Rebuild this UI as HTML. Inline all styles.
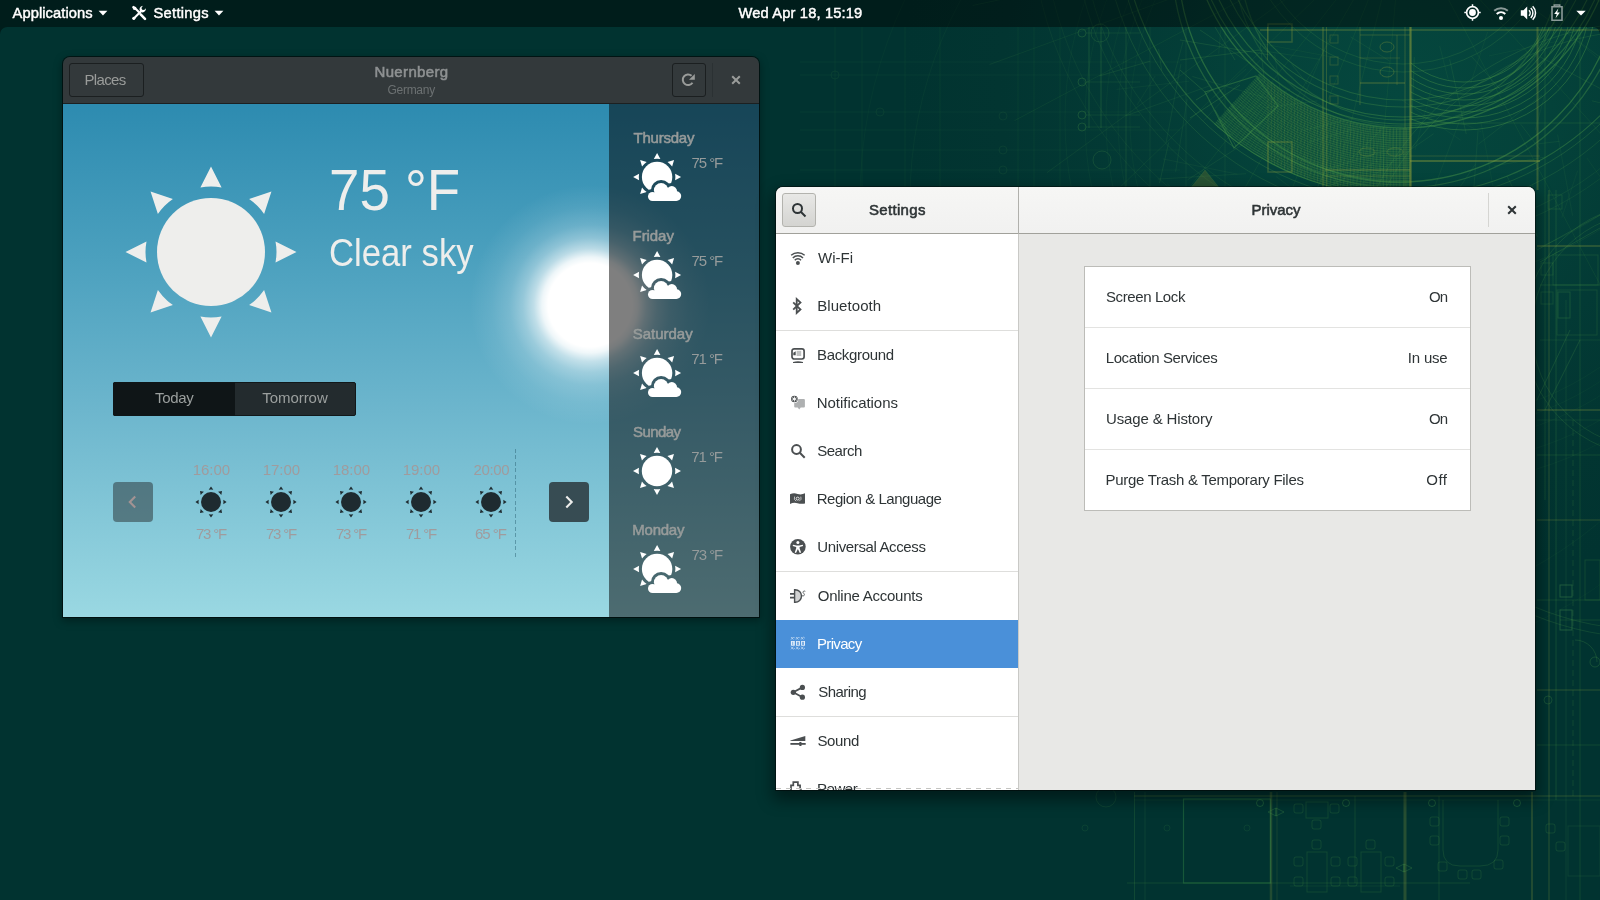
<!DOCTYPE html>
<html>
<head>
<meta charset="utf-8">
<title>Desktop</title>
<style>
*{box-sizing:border-box;margin:0;padding:0}
html,body{width:1600px;height:900px;overflow:hidden;background:#013331;font-family:"Liberation Sans",sans-serif;}
.abs{position:absolute}
#wx,#st,#topbar{will-change:transform}
#wall{position:absolute;left:0;top:0;width:1600px;height:900px}
/* top bar */
#topbar{position:absolute;left:0;top:0;width:1600px;height:27px;background:rgba(0,0,0,0.42);color:#fff;font-size:14.7px;font-weight:normal;-webkit-text-stroke:0.45px #fff;text-shadow:0 1px 1px rgba(0,0,0,0.5)}
#topbar .t{position:absolute;top:0;height:27px;line-height:26px;white-space:nowrap}
/* weather window */
#wx{position:absolute;left:63px;top:57px;width:696px;height:560px;border-radius:7px 7px 0 0;overflow:hidden;box-shadow:0 0 0 1px rgba(0,0,0,0.55),0 3px 9px 1px rgba(0,0,0,0.35)}
#wxhead{position:absolute;left:0;top:0;width:696px;height:47px;background:#33393b;border-bottom:1px solid #1c2021}
#wxbody{position:absolute;left:0;top:47px;width:696px;height:513px;background:linear-gradient(#2d8bb0 0%,#4ba0be 30%,#6db6cd 60%,#9ad8e2 100%);overflow:hidden}
#wxside{position:absolute;left:546px;top:0;width:150px;height:513px;background:rgba(0,0,0,0.5)}
.wbtn{position:absolute;border:1px solid #1b1f20;border-radius:3px;background:#33393b;color:#9a9c9a;font-size:15px;text-align:center}
/* settings window */
#st{position:absolute;left:776px;top:187px;width:759px;height:603px;border-radius:7px 7px 0 0;overflow:hidden;background:#e8e8e6;box-shadow:0 0 0 1px rgba(0,0,0,0.45),0 7px 16px 3px rgba(0,0,0,0.45)}
#sthead{position:absolute;left:0;top:0;width:759px;height:47px;background:linear-gradient(#f6f6f5,#f1f1f0);border-bottom:1px solid #a1a19b}
#stside{position:absolute;left:0;top:47px;width:242px;height:556px;background:#fff;overflow:hidden}
#stsep{position:absolute;left:242px;top:0;width:1px;height:603px;background:linear-gradient(#b0b0ac 0,#b0b0ac 47px,#c9c9c6 47px)}
.row{position:absolute;left:0;width:242px;height:48px;color:#2e3436;font-size:15px;line-height:48px;padding-left:42px;white-space:nowrap}
.row svg{position:absolute;left:14px;top:16px;width:16px;height:16px;color:#4b4f51;overflow:visible}
.row.sel svg{color:rgba(255,255,255,0.85)}
.hr{position:absolute;left:0;width:242px;height:1px;background:#dededc}
#list{position:absolute;left:308px;top:79px;width:387px;height:245px;background:#fff;border:1px solid #bcbcb8}
.li{position:absolute;left:0;width:385px;height:61px;line-height:60px;font-size:15px;color:#2e3436}
.li .l{position:absolute;left:22px}
.li .r{position:absolute;right:22px}

#glow{position:absolute;left:407px;top:80.5px;width:240px;height:240px;border-radius:50%;background:radial-gradient(circle closest-side,#fff 0%,#fff 35%,rgba(255,255,255,0.9) 40%,rgba(255,255,255,0.62) 47%,rgba(255,255,255,0.38) 56%,rgba(255,255,255,0.2) 67%,rgba(255,255,255,0.08) 82%,rgba(255,255,255,0) 100%)}
.hl{text-align:center;font-size:15px;line-height:18px;color:#a09b9d;white-space:nowrap}
.dn{font-size:15px;font-weight:normal;-webkit-text-stroke:0.55px #979b9a;line-height:18px;color:#979b9a;white-space:nowrap}
.dt{font-size:15px;line-height:18px;color:#969b9b;white-space:nowrap}
.tg{height:34px;line-height:31.5px;text-align:center;font-size:15px;color:#9b9f9e;white-space:nowrap}
.row.sel{background:#4a90d9;color:#fff}
</style>
</head>
<body>
<svg id="wall" viewBox="0 0 1600 900"><defs>
<radialGradient id="wg" cx="1400" cy="95" r="500" gradientUnits="userSpaceOnUse">
<stop offset="0" stop-color="#05473e"/><stop offset="0.3" stop-color="#04423a"/><stop offset="0.55" stop-color="#033a35"/><stop offset="0.8" stop-color="#023531"/><stop offset="1" stop-color="#013330"/>
</radialGradient>
<clipPath id="cband"><rect x="1180" y="27" width="230.5" height="163"/></clipPath>
<clipPath id="cR"><rect x="1410.5" y="27" width="190" height="163"/></clipPath>
</defs>
<rect width="1600" height="900" fill="url(#wg)"/>
<g fill="none" stroke="#4a9648" stroke-width="1"><g clip-path="url(#cband)"><path d="M1259.8 73A214 214 0 0 0 1440.2 124.7L1452 191.7A282 282 0 0 1 1214.3 123.6Z" fill="#3f8f45" fill-opacity="0.14" stroke="none"/><g stroke-opacity="0.39" stroke-width="0.8"><path d="M1258.5 74.5A216 216 0 0 0 1440.5 126.7"/><path d="M1257 76.2A218.2 218.2 0 0 0 1440.9 128.9"/><path d="M1255.5 77.8A220.4 220.4 0 0 0 1441.3 131.1"/><path d="M1254.1 79.4A222.6 222.6 0 0 0 1441.7 133.2"/><path d="M1252.6 81.1A224.8 224.8 0 0 0 1442 135.4"/><path d="M1251.1 82.7A227 227 0 0 0 1442.4 137.6"/><path d="M1249.6 84.3A229.2 229.2 0 0 0 1442.8 139.7"/><path d="M1248.2 86A231.4 231.4 0 0 0 1443.2 141.9"/><path d="M1246.7 87.6A233.6 233.6 0 0 0 1443.6 144.1"/><path d="M1245.2 89.2A235.8 235.8 0 0 0 1443.9 146.2"/><path d="M1243.7 90.9A238 238 0 0 0 1444.3 148.4"/><path d="M1242.3 92.5A240.2 240.2 0 0 0 1444.7 150.6"/><path d="M1240.8 94.1A242.4 242.4 0 0 0 1445.1 152.7"/><path d="M1239.3 95.8A244.6 244.6 0 0 0 1445.5 154.9"/><path d="M1237.9 97.4A246.8 246.8 0 0 0 1445.9 157.1"/><path d="M1236.4 99A249 249 0 0 0 1446.2 159.2"/><path d="M1234.9 100.7A251.2 251.2 0 0 0 1446.6 161.4"/><path d="M1233.4 102.3A253.4 253.4 0 0 0 1447 163.6"/><path d="M1232 103.9A255.6 255.6 0 0 0 1447.4 165.7"/><path d="M1230.5 105.6A257.8 257.8 0 0 0 1447.8 167.9"/><path d="M1229 107.2A260 260 0 0 0 1448.1 170.1"/><path d="M1227.6 108.9A262.2 262.2 0 0 0 1448.5 172.2"/><path d="M1226.1 110.5A264.4 264.4 0 0 0 1448.9 174.4"/><path d="M1224.6 112.1A266.6 266.6 0 0 0 1449.3 176.5"/><path d="M1223.1 113.8A268.8 268.8 0 0 0 1449.7 178.7"/><path d="M1221.7 115.4A271 271 0 0 0 1450.1 180.9"/><path d="M1220.2 117A273.2 273.2 0 0 0 1450.4 183"/><path d="M1218.7 118.7A275.4 275.4 0 0 0 1450.8 185.2"/><path d="M1217.2 120.3A277.6 277.6 0 0 0 1451.2 187.4"/><path d="M1215.8 121.9A279.8 279.8 0 0 0 1451.6 189.5"/><path d="M1214.3 123.6A282 282 0 0 0 1452 191.7"/></g><path d="M1440.5 126.7L1451.6 189.7M1437.2 127.3L1447.3 190.5M1433.8 127.8L1442.9 191.1M1430.4 128.2L1438.6 191.7M1427.1 128.7L1434.2 192.3M1423.7 129L1429.8 192.7M1420.3 129.3L1425.5 193.1M1416.9 129.5L1421.1 193.4M1413.6 129.7L1416.7 193.7M1410.2 129.9L1412.3 193.8M1406.8 130L1407.9 194M1403.4 130L1403.5 194M1400 130L1399.1 194M1396.6 129.9L1394.7 193.9M1393.2 129.8L1390.3 193.7M1389.8 129.6L1385.9 193.5M1386.4 129.4L1381.5 193.2M1383 129.1L1377.1 192.8M1379.7 128.7L1372.8 192.4M1376.3 128.3L1368.4 191.9M1372.9 127.9L1364 191.3M1369.6 127.4L1359.7 190.6M1366.2 126.8L1355.3 189.9M1362.9 126.2L1351 189.1M1359.6 125.6L1346.7 188.3M1356.2 124.9L1342.4 187.4M1352.9 124.1L1338.1 186.4M1349.6 123.3L1333.8 185.3M1346.4 122.4L1329.6 184.2M1343.1 121.5L1325.4 183M1339.8 120.6L1321.1 181.8M1336.6 119.5L1316.9 180.4M1333.4 118.5L1312.8 179.1M1330.2 117.4L1308.6 177.6M1327 116.2L1304.5 176.1M1323.8 115L1300.4 174.5M1320.7 113.7L1296.3 172.9M1317.6 112.4L1292.2 171.2M1314.5 111L1288.2 169.4M1311.4 109.6L1284.2 167.6M1308.3 108.1L1280.3 165.7M1305.3 106.6L1276.3 163.7M1302.3 105.1L1272.4 161.7M1299.3 103.5L1268.5 159.6M1296.3 101.8L1264.7 157.5M1293.4 100.1L1260.9 155.3M1290.5 98.4L1257.1 153M1287.6 96.6L1253.4 150.7M1284.7 94.7L1249.7 148.3M1281.9 92.9L1246 145.9M1279.1 90.9L1242.4 143.4M1276.3 89L1238.8 140.8M1273.6 87L1235.3 138.2M1270.9 84.9L1231.8 135.5M1268.2 82.8L1228.3 132.8M1265.6 80.7L1224.9 130.1M1263 78.5L1221.5 127.2M1260.4 76.3L1218.2 124.4" stroke-opacity="0.21" stroke-width="0.7"/><clipPath id="cw"><path d="M1259.8 73A214 214 0 0 0 1440.2 124.7L1452 191.7A282 282 0 0 1 1214.3 123.6Z"/></clipPath><path clip-path="url(#cw)" d="M1268 27V190M1271.3 27V190M1274.6 27V190M1277.9 27V190M1281.2 27V190M1284.5 27V190M1287.8 27V190M1291.1 27V190M1294.4 27V190M1297.7 27V190M1301 27V190M1304.3 27V190M1307.6 27V190M1310.9 27V190M1314.2 27V190M1317.5 27V190M1320.8 27V190M1324.1 27V190M1327.4 27V190M1330.7 27V190M1334 27V190M1337.3 27V190M1340.6 27V190M1343.9 27V190M1347.2 27V190M1350.5 27V190M1353.8 27V190M1357.1 27V190M1360.4 27V190M1363.7 27V190M1367 27V190M1370.3 27V190M1373.6 27V190M1376.9 27V190M1380.2 27V190M1383.5 27V190M1386.8 27V190M1390.1 27V190M1393.4 27V190M1396.7 27V190M1400 27V190M1403.3 27V190M1406.6 27V190M1409.9 27V190" stroke="#8a9a3a" stroke-opacity="0.20" stroke-width="0.8"/></g><circle cx="1403" cy="-86" r="150" stroke-opacity="0.21" stroke-width="1"/><circle cx="1403" cy="-86" r="158" stroke-opacity="0.21" stroke-width="1"/><circle cx="1403" cy="-86" r="186" stroke-opacity="0.35" stroke-width="1.1"/><circle cx="1403" cy="-86" r="193" stroke-opacity="0.35" stroke-width="1.1"/><circle cx="1403" cy="-86" r="203" stroke-opacity="0.42" stroke-width="1.2"/><circle cx="1403" cy="-86" r="210" stroke-opacity="0.42" stroke-width="1.2"/><circle cx="1403" cy="-86" r="214" stroke-opacity="0.49" stroke-width="1.3"/><circle cx="1403" cy="-86" r="282" stroke-opacity="0.42" stroke-width="1.2"/><circle cx="1403" cy="-86" r="288" stroke-opacity="0.28" stroke-width="1"/><circle cx="1403" cy="-86" r="300" stroke-opacity="0.21" stroke-width="1"/><circle cx="1403" cy="-86" r="322" stroke-opacity="0.14" stroke-width="1"/><circle cx="1403" cy="-86" r="330" stroke-opacity="0.14" stroke-width="1"/><circle cx="1403" cy="-86" r="360" stroke-opacity="0.10" stroke-width="1"/><circle cx="1403" cy="-86" r="372" stroke-opacity="0.10" stroke-width="1"/><g clip-path="url(#cR)" stroke-opacity="0.42"><circle cx="1464" cy="-2" r="84"/><circle cx="1464" cy="-2" r="90"/><circle cx="1464" cy="-2" r="96"/><circle cx="1464" cy="-2" r="102"/><circle cx="1464" cy="-2" r="108"/><circle cx="1464" cy="-2" r="114"/><circle cx="1464" cy="-2" r="120"/><circle cx="1464" cy="-2" r="126"/><circle cx="1464" cy="-2" r="132"/></g><circle cx="1400" cy="-40" r="222" stroke-opacity="0.49" stroke-width="1.3"/><circle cx="1400" cy="-40" r="228" stroke-opacity="0.39" stroke-width="1.3"/><circle cx="1400" cy="-40" r="160" stroke-opacity="0.32" stroke-width="1.3"/><circle cx="1400" cy="-40" r="166" stroke-opacity="0.24" stroke-width="1.3"/><circle cx="1650" cy="330" r="118" stroke-opacity="0.21"/><circle cx="1650" cy="330" r="126" stroke-opacity="0.21"/><circle cx="1650" cy="330" r="300" stroke-opacity="0.21"/><circle cx="1650" cy="330" r="308" stroke-opacity="0.21"/><path d="M1403 -86L1364.7 352.3" stroke-opacity="0.15" stroke-width="0.8"/><path d="M1403 -86L1296.6 340.9" stroke-opacity="0.15" stroke-width="0.8"/><path d="M1403 -86L1238.2 322" stroke-opacity="0.15" stroke-width="0.8"/><path d="M1403 -86L1183 295.1" stroke-opacity="0.15" stroke-width="0.8"/><path d="M1403 -86L1132.1 260.7" stroke-opacity="0.15" stroke-width="0.8"/><path d="M1403 -86L1086.5 219.6" stroke-opacity="0.15" stroke-width="0.8"/><path d="M1403 -86L1047 172.6" stroke-opacity="0.15" stroke-width="0.8"/><path d="M1403 -86L1014.5 120.6" stroke-opacity="0.15" stroke-width="0.8"/><path d="M1403 -86L989.5 64.5" stroke-opacity="0.15" stroke-width="0.8"/><path d="M1403 -86L972.6 5.5" stroke-opacity="0.15" stroke-width="0.8"/><path d="M1403 -86L1609.6 302.5" stroke-opacity="0.15" stroke-width="0.8"/><path d="M1403 -86L1697.4 241" stroke-opacity="0.15" stroke-width="0.8"/><path d="M1403 -86L1759 172.6" stroke-opacity="0.15" stroke-width="0.8"/><path d="M1403 -86L1805 93" stroke-opacity="0.15" stroke-width="0.8"/><path d="M1410.5 27V190" stroke-opacity="0.59" stroke-width="2.2" stroke="#8a9a3a"/><path d="M1405 27V190" stroke-opacity="0.32" stroke-width="1" stroke="#8a9a3a"/><path d="M1323 27V190" stroke-opacity="0.42" stroke-width="1.3" stroke="#8a9a3a"/><path d="M1326.5 27V190" stroke-opacity="0.32" stroke-width="1" stroke="#8a9a3a"/><path d="M1360 27V105" stroke-opacity="0.32" stroke-width="1" stroke="#8a9a3a"/><path d="M1397 35V85" stroke-opacity="0.28" stroke-width="1" stroke="#8a9a3a"/><path d="M1537.5 27V190" stroke-opacity="0.35" stroke-width="2" stroke="#8a9a3a"/><path d="M1549 190V900" stroke-opacity="0.21" stroke-width="1.5" stroke="#8a9a3a"/><path d="M1267.5 27V60" stroke-opacity="0.28" stroke-width="1" stroke="#8a9a3a"/><path d="M1545 27V500" stroke-opacity="0.21" stroke-width="1"/><path d="M1556 190V800" stroke-opacity="0.24" stroke-width="1"/><path d="M1580 27V900" stroke-opacity="0.21" stroke-width="1"/><path d="M1566 300V900" stroke-opacity="0.17" stroke-width="1"/><path d="M1410 161H1540" stroke-opacity="0.42" stroke-width="2" stroke="#8a9a3a"/><path d="M1410 156H1540" stroke-opacity="0.28" stroke-width="1" stroke="#8a9a3a"/><path d="M1410 123H1600" stroke-opacity="0.21" stroke-width="1"/><path d="M1325 170H1410" stroke-opacity="0.35" stroke-width="1.5" stroke="#8a9a3a"/><path d="M1325 176H1410" stroke-opacity="0.28" stroke-width="1" stroke="#8a9a3a"/><path d="M1260 30H1600" stroke-opacity="0.28" stroke-width="2" stroke="#8a9a3a"/><path d="M1360 83H1405" stroke-opacity="0.35" stroke-width="1.5" stroke="#8a9a3a"/><path d="M1360 35H1410" stroke-opacity="0.32" stroke-width="1.2" stroke="#8a9a3a"/><path d="M1360 58H1400" stroke-opacity="0.24" stroke-width="1" stroke="#8a9a3a"/><rect x="1268" y="142" width="24" height="30" rx="0" stroke-opacity="0.35" stroke-width="1.5" stroke="#8a9a3a"/><rect x="1268" y="24" width="24" height="18" rx="0" stroke-opacity="0.32" stroke-width="1.5" stroke="#8a9a3a"/><rect x="1330" y="35" width="8" height="8" rx="0" stroke-opacity="0.28" stroke-width="1" stroke="#8a9a3a"/><rect x="1330" y="57" width="8" height="8" rx="0" stroke-opacity="0.28" stroke-width="1" stroke="#8a9a3a"/><rect x="1330" y="76" width="8" height="8" rx="0" stroke-opacity="0.28" stroke-width="1" stroke="#8a9a3a"/><rect x="1330" y="96" width="8" height="8" rx="0" stroke-opacity="0.28" stroke-width="1" stroke="#8a9a3a"/><ellipse cx="1387" cy="47" rx="7" ry="5" stroke-opacity="0.35" stroke="#8a9a3a"/><ellipse cx="1387" cy="72" rx="7" ry="5" stroke-opacity="0.35" stroke="#8a9a3a"/><ellipse cx="1367" cy="152" rx="8" ry="4" stroke-opacity="0.28" stroke="#8a9a3a"/><ellipse cx="1395" cy="152" rx="8" ry="4" stroke-opacity="0.28" stroke="#8a9a3a"/><path d="M1205 92L1256 76L1278 106L1234 148Z" stroke-opacity="0.42" stroke-width="1.2"/><path d="M1215 110L1236 146M1196 100L1212 90M1190 118L1240 85M1205 92L1180 70" stroke-opacity="0.28"/><path d="M1180 40L1270 55M1200 30L1290 90M1215 27L1235 60M1180 60L1260 50" stroke-opacity="0.21"/><path d="M1089 27V128" stroke-opacity="0.28" stroke-width="1"/><path d="M1101 27V128" stroke-opacity="0.28" stroke-width="1"/><path d="M1126 27V190" stroke-opacity="0.21" stroke-width="1"/><path d="M1150 27V190" stroke-opacity="0.14" stroke-width="1"/><path d="M1186 27V190" stroke-opacity="0.14" stroke-width="1"/><path d="M1225 27V190" stroke-opacity="0.14" stroke-width="1"/><circle cx="1082" cy="33" r="4" stroke-opacity="0.28"/><path d="M1086 33H1140" stroke-opacity="0.17" stroke-width="1"/><circle cx="1082" cy="82" r="4" stroke-opacity="0.28"/><path d="M1086 82H1140" stroke-opacity="0.17" stroke-width="1"/><circle cx="1082" cy="115" r="4" stroke-opacity="0.28"/><path d="M1086 115H1140" stroke-opacity="0.17" stroke-width="1"/><circle cx="1082" cy="127" r="4" stroke-opacity="0.28"/><path d="M1086 127H1140" stroke-opacity="0.17" stroke-width="1"/><circle cx="1102" cy="160" r="9" stroke-opacity="0.21"/><circle cx="1100" cy="33" r="9" stroke-opacity="0.21"/><path d="M1189 190L1205 170L1221 190Z" fill="#8a8a2a" fill-opacity="0.28" stroke-opacity="0.21"/><circle cx="1430" cy="120" r="300" stroke-opacity="0.07"/><circle cx="1430" cy="120" r="312" stroke-opacity="0.07"/><circle cx="1430" cy="120" r="324" stroke-opacity="0.07"/><circle cx="1430" cy="120" r="345" stroke-opacity="0.07"/><circle cx="1430" cy="120" r="365" stroke-opacity="0.07"/><path d="M1353.6 118.2l-51.1 12.4" stroke-opacity="0.17" stroke-width="0.8"/><path d="M1414.3 57.1l-2.4 64" stroke-opacity="0.20" stroke-width="0.8"/><path d="M1192.4 76.5l73.6 21.5" stroke-opacity="0.19" stroke-width="0.8"/><path d="M1168.8 187.1l-65.4 7.3" stroke-opacity="0.18" stroke-width="0.8"/><path d="M1220.9 29.4l-2.2 24.1" stroke-opacity="0.13" stroke-width="0.8"/><path d="M1258.9 31.9l5.7 50.5" stroke-opacity="0.21" stroke-width="0.8"/><path d="M1383.6 131.4l0 66.4" stroke-opacity="0.16" stroke-width="0.8"/><path d="M1275.2 189.6l-78.8 1.1" stroke-opacity="0.19" stroke-width="0.8"/><path d="M1291.9 64.4l15.3 19.6" stroke-opacity="0.20" stroke-width="0.8"/><path d="M1330.2 165l30.4 81.6" stroke-opacity="0.21" stroke-width="0.8"/><path d="M1150.2 61.2l-50.8 14.7" stroke-opacity="0.22" stroke-width="0.8"/><path d="M1328.8 38.9l-29.5 68.4" stroke-opacity="0.14" stroke-width="0.8"/><path d="M1189.2 81.2l-72.6 8.2" stroke-opacity="0.12" stroke-width="0.8"/><path d="M1260.9 43.5l74.5 14.2" stroke-opacity="0.13" stroke-width="0.8"/><path d="M1401.7 99.9l58.8 40.2" stroke-opacity="0.12" stroke-width="0.8"/><path d="M1439.7 46l8.6 33.8" stroke-opacity="0.14" stroke-width="0.8"/><path d="M1586.9 158l47.3 66.9" stroke-opacity="0.13" stroke-width="0.8"/><path d="M1327.4 166.3l-11.6 24.4" stroke-opacity="0.22" stroke-width="0.8"/><path d="M1246 69.1l-32.5 28.2" stroke-opacity="0.14" stroke-width="0.8"/><path d="M1183 41.7l-9.5 35.8" stroke-opacity="0.18" stroke-width="0.8"/><path d="M1317.3 100.9l-53.4 6.9" stroke-opacity="0.17" stroke-width="0.8"/><path d="M1539.9 56.8l74 38.9" stroke-opacity="0.20" stroke-width="0.8"/><path d="M1262.3 57.9l-58.6 62.7" stroke-opacity="0.13" stroke-width="0.8"/><path d="M1577.6 170.8l-15.8 46.9" stroke-opacity="0.12" stroke-width="0.8"/><path d="M1167.4 183.9l50.8 47.2" stroke-opacity="0.14" stroke-width="0.8"/><path d="M1520.7 124.2l19.5 25.7" stroke-opacity="0.19" stroke-width="0.8"/><path d="M1180.9 64.2l-14.8 78.3" stroke-opacity="0.18" stroke-width="0.8"/><path d="M1276.1 176.5l17 12.7" stroke-opacity="0.14" stroke-width="0.8"/><path d="M1350.6 36.9l39 24.1" stroke-opacity="0.17" stroke-width="0.8"/><path d="M1209.2 86l-83.5 29.8" stroke-opacity="0.18" stroke-width="0.8"/><path d="M1461 122.3l20.3 9.6" stroke-opacity="0.11" stroke-width="0.8"/><path d="M1559.6 141.3l-21.3 2.5" stroke-opacity="0.18" stroke-width="0.8"/><path d="M1367 146.1l48.5 75.8" stroke-opacity="0.11" stroke-width="0.8"/><path d="M1395.7 147.1l-68.1 22.1" stroke-opacity="0.19" stroke-width="0.8"/><path d="M1507 176.1l30.5 60.7" stroke-opacity="0.21" stroke-width="0.8"/><path d="M1542 95l-63.6 49.2" stroke-opacity="0.17" stroke-width="0.8"/><path d="M1431.2 89.3l-16.1 60.5" stroke-opacity="0.11" stroke-width="0.8"/><path d="M1437.7 188.9l-66 26.2" stroke-opacity="0.15" stroke-width="0.8"/><path d="M1480.8 121.7l14.6 77.3" stroke-opacity="0.11" stroke-width="0.8"/><path d="M1487.6 31.9l-16.8 51" stroke-opacity="0.13" stroke-width="0.8"/><path d="M1464.3 108.1l-29.7 79" stroke-opacity="0.14" stroke-width="0.8"/><path d="M1155.1 76.1l-18.1 29" stroke-opacity="0.13" stroke-width="0.8"/><path d="M1557.6 134.6l15 81.1" stroke-opacity="0.14" stroke-width="0.8"/><path d="M1449.7 59.4l16.5 74.6" stroke-opacity="0.21" stroke-width="0.8"/><path d="M1546.1 89.7l-10.9 40.7" stroke-opacity="0.12" stroke-width="0.8"/><path d="M1373.4 163.4l-62.1 31.9" stroke-opacity="0.22" stroke-width="0.8"/><path d="M1274.6 54.6l6.1 38.8" stroke-opacity="0.13" stroke-width="0.8"/><path d="M1336.3 129l0.8 42.1" stroke-opacity="0.20" stroke-width="0.8"/><path d="M1591.9 100.8l21.6 5.2" stroke-opacity="0.21" stroke-width="0.8"/><path d="M1168.7 142.5l-9.2 40.6" stroke-opacity="0.20" stroke-width="0.8"/><path d="M1158.6 49.1l3.1 21.5" stroke-opacity="0.20" stroke-width="0.8"/><path d="M1256.8 50l63.3 9.4" stroke-opacity="0.16" stroke-width="0.8"/><path d="M1433.5 133.8l-71.6 49.5" stroke-opacity="0.19" stroke-width="0.8"/><path d="M1239.7 104.4l17.6 11" stroke-opacity="0.16" stroke-width="0.8"/><path d="M1471.4 56.2l29 33.4" stroke-opacity="0.19" stroke-width="0.8"/><path d="M1384.2 127.2l-34.3 33" stroke-opacity="0.20" stroke-width="0.8"/><path d="M1557.8 41.2l-69 14.8" stroke-opacity="0.12" stroke-width="0.8"/><path d="M1354.1 129l-44.5 12.9" stroke-opacity="0.17" stroke-width="0.8"/><path d="M1545.7 156.9l-51.7 9.1" stroke-opacity="0.18" stroke-width="0.8"/><path d="M1242.2 144.7l-54.6 35.1" stroke-opacity="0.19" stroke-width="0.8"/><path d="M1246 173.7l-88.2 5.4" stroke-opacity="0.17" stroke-width="0.8"/><path d="M1505.9 79.2l-76.7 22.3" stroke-opacity="0.15" stroke-width="0.8"/><path d="M1187.2 98.9l-11.6 72.9" stroke-opacity="0.16" stroke-width="0.8"/><path d="M1162.8 158.9l74.5 15.2" stroke-opacity="0.13" stroke-width="0.8"/><path d="M1300.8 155.4l27.5 13" stroke-opacity="0.17" stroke-width="0.8"/><path d="M1475.6 163.9l-48.3 71.4" stroke-opacity="0.16" stroke-width="0.8"/><path d="M1577.1 41l43.7 36.4" stroke-opacity="0.14" stroke-width="0.8"/><path d="M1478 131.1l-5.7 78.9" stroke-opacity="0.17" stroke-width="0.8"/><path d="M1290.3 89.1l-73.4 38.8" stroke-opacity="0.13" stroke-width="0.8"/><path d="M1532.8 184.9l-4.6 59.9" stroke-opacity="0.13" stroke-width="0.8"/><path d="M835 27V187" stroke-opacity="0.09" stroke-width="1"/><path d="M862 27V187" stroke-opacity="0.09" stroke-width="1"/><path d="M905 27V187" stroke-opacity="0.09" stroke-width="1"/><path d="M940 27V187" stroke-opacity="0.09" stroke-width="1"/><path d="M1018 27V187" stroke-opacity="0.09" stroke-width="1"/><path d="M1034 27V187" stroke-opacity="0.09" stroke-width="1"/><path d="M1060 27V187" stroke-opacity="0.09" stroke-width="1"/><path d="M800 62H1180" stroke-opacity="0.08" stroke-width="1"/><path d="M800 75H1180" stroke-opacity="0.08" stroke-width="1"/><path d="M800 112H1180" stroke-opacity="0.08" stroke-width="1"/><path d="M800 130H1180" stroke-opacity="0.08" stroke-width="1"/><path d="M800 150H1180" stroke-opacity="0.08" stroke-width="1"/><path d="M800 170H1180" stroke-opacity="0.08" stroke-width="1"/><circle cx="1003" cy="116" r="4" stroke-opacity="0.11"/><circle cx="1003" cy="150" r="4" stroke-opacity="0.11"/><circle cx="1003" cy="170" r="4" stroke-opacity="0.11"/><circle cx="880" cy="112" r="4" stroke-opacity="0.11"/><circle cx="835" cy="75" r="4" stroke-opacity="0.11"/><circle cx="1003" cy="215" r="16" stroke-opacity="0.10"/><circle cx="1330" cy="200" r="420" stroke-opacity="0.07"/><circle cx="1330" cy="200" r="470" stroke-opacity="0.06"/><rect x="1548" y="195" width="14" height="14" rx="0" stroke-opacity="0.21" stroke-width="1"/><rect x="1541" y="263" width="12" height="12" rx="0" stroke-opacity="0.21" stroke-width="1"/><rect x="1541" y="292" width="12" height="12" rx="0" stroke-opacity="0.21" stroke-width="1"/><rect x="1553" y="255" width="45" height="30" rx="0" stroke-opacity="0.21" stroke-width="1"/><rect x="1558" y="292" width="12" height="26" rx="0" stroke-opacity="0.28" stroke-width="1"/><rect x="1557" y="290" width="40" height="45" rx="0" stroke-opacity="0.21" stroke-width="1"/><path d="M1537 246H1600" stroke-opacity="0.28" stroke-width="2" stroke="#8a9a3a"/><path d="M1540 285H1600" stroke-opacity="0.24" stroke-width="1"/><path d="M1540 340H1600" stroke-opacity="0.17" stroke-width="1"/><path d="M1537 410H1600" stroke-opacity="0.24" stroke-width="2" stroke="#8a9a3a"/><path d="M1537 420H1600" stroke-opacity="0.17" stroke-width="1"/><path d="M1537 455H1600" stroke-opacity="0.21" stroke-width="1"/><path d="M1537 520H1600" stroke-opacity="0.21" stroke-width="1.5" stroke="#8a9a3a"/><path d="M1537 600H1600" stroke-opacity="0.21" stroke-width="1"/><path d="M1560 620H1600" stroke-opacity="0.21" stroke-width="1"/><path d="M1537 690H1600" stroke-opacity="0.21" stroke-width="1.5" stroke="#8a9a3a"/><path d="M1537 745H1600" stroke-opacity="0.21" stroke-width="1"/><path d="M1537 250L1600 215M1540 262L1600 228M1537 400L1570 330M1545 410L1580 340" stroke-opacity="0.24"/><rect x="1560" y="585" width="12" height="12" rx="0" stroke-opacity="0.32" stroke-width="1" stroke="#5fae5a"/><rect x="1560" y="610" width="12" height="20" rx="0" stroke-opacity="0.32" stroke-width="1" stroke="#5fae5a"/><rect x="1585" y="560" width="15" height="40" rx="0" stroke-opacity="0.21" stroke-width="1"/><circle cx="1595" cy="662" r="5" stroke-opacity="0.28"/><circle cx="1548" cy="700" r="4" stroke-opacity="0.28"/><path d="M1575 640a22 22 0 0 1 22 22" stroke-opacity="0.24"/><path d="M1573 420V800" stroke-opacity="0.21" stroke-width="1" stroke-dasharray="6 4"/><path d="M1134 796H1600" stroke-opacity="0.21" stroke-width="1.5" stroke="#8a9a3a"/><path d="M1134 800H1600" stroke-opacity="0.14" stroke-width="1"/><path d="M1127 883H1470" stroke-opacity="0.21" stroke-width="1.2"/><path d="M1290 886H1400" stroke-opacity="0.14" stroke-width="1"/><path d="M1134.5 792V900" stroke-opacity="0.21" stroke-width="1"/><path d="M1145 792V900" stroke-opacity="0.17" stroke-width="1"/><path d="M1271 792V900" stroke-opacity="0.24" stroke-width="2.5" stroke="#8a9a3a"/><path d="M1277 792V900" stroke-opacity="0.17" stroke-width="1" stroke="#8a9a3a"/><path d="M1355 796V883" stroke-opacity="0.21" stroke-width="1"/><path d="M1405 792V900" stroke-opacity="0.28" stroke-width="3" stroke="#8a9a3a"/><path d="M1439 796V900" stroke-opacity="0.21" stroke-width="1"/><path d="M1532 792V900" stroke-opacity="0.24" stroke-width="2" stroke="#8a9a3a"/><rect x="1183.5" y="799" width="87" height="84" rx="0" stroke-opacity="0.35" stroke-width="1.2" stroke="#3f9a4a"/><circle cx="1106" cy="797" r="10" stroke-opacity="0.17"/><circle cx="1260" cy="803" r="3.5" stroke-opacity="0.32" stroke="#4aa04a"/><circle cx="1346" cy="803" r="3.5" stroke-opacity="0.32" stroke="#4aa04a"/><circle cx="1432" cy="803" r="3.5" stroke-opacity="0.32" stroke="#4aa04a"/><circle cx="1517" cy="803" r="3.5" stroke-opacity="0.32" stroke="#4aa04a"/><circle cx="1085" cy="828" r="3" stroke-opacity="0.14"/><circle cx="1167" cy="828" r="3" stroke-opacity="0.14"/><circle cx="1247" cy="828" r="3" stroke-opacity="0.14"/><rect x="1307" y="852" width="20" height="40" rx="0" stroke-opacity="0.21" stroke-width="1"/><rect x="1294" y="857" width="9" height="9" rx="2" stroke-opacity="0.21" stroke-width="1"/><rect x="1331" y="857" width="9" height="9" rx="2" stroke-opacity="0.21" stroke-width="1"/><rect x="1294" y="877" width="9" height="9" rx="2" stroke-opacity="0.21" stroke-width="1"/><rect x="1331" y="877" width="9" height="9" rx="2" stroke-opacity="0.21" stroke-width="1"/><rect x="1312" y="840" width="9" height="9" rx="2" stroke-opacity="0.21" stroke-width="1"/><rect x="1361" y="852" width="20" height="40" rx="0" stroke-opacity="0.21" stroke-width="1"/><rect x="1348" y="857" width="9" height="9" rx="2" stroke-opacity="0.21" stroke-width="1"/><rect x="1385" y="857" width="9" height="9" rx="2" stroke-opacity="0.21" stroke-width="1"/><rect x="1348" y="877" width="9" height="9" rx="2" stroke-opacity="0.21" stroke-width="1"/><rect x="1385" y="877" width="9" height="9" rx="2" stroke-opacity="0.21" stroke-width="1"/><rect x="1366" y="840" width="9" height="9" rx="2" stroke-opacity="0.21" stroke-width="1"/><rect x="1306" y="802" width="22" height="16" rx="0" stroke-opacity="0.21" stroke-width="1"/><rect x="1294" y="804" width="9" height="9" rx="2" stroke-opacity="0.21" stroke-width="1"/><rect x="1330" y="804" width="9" height="9" rx="2" stroke-opacity="0.21" stroke-width="1"/><rect x="1312" y="820" width="9" height="9" rx="2" stroke-opacity="0.21" stroke-width="1"/><path d="M1443 800V850Q1443 866 1460 866H1480Q1498 866 1498 850V800" stroke-opacity="0.21"/><rect x="1430" y="817" width="9" height="9" rx="2" stroke-opacity="0.21" stroke-width="1"/><rect x="1500" y="817" width="9" height="9" rx="2" stroke-opacity="0.21" stroke-width="1"/><rect x="1430" y="836" width="9" height="9" rx="2" stroke-opacity="0.21" stroke-width="1"/><rect x="1500" y="836" width="9" height="9" rx="2" stroke-opacity="0.21" stroke-width="1"/><rect x="1458" y="870" width="9" height="9" rx="2" stroke-opacity="0.21" stroke-width="1"/><rect x="1472" y="870" width="9" height="9" rx="2" stroke-opacity="0.21" stroke-width="1"/><rect x="1438" y="862" width="9" height="9" rx="2" stroke-opacity="0.21" stroke-width="1"/><rect x="1494" y="860" width="9" height="9" rx="2" stroke-opacity="0.21" stroke-width="1"/><rect x="1568" y="826" width="32" height="50" rx="0" stroke-opacity="0.17" stroke-width="1"/><rect x="1546" y="824" width="9" height="9" rx="2" stroke-opacity="0.21" stroke-width="1"/><rect x="1556" y="842" width="9" height="9" rx="2" stroke-opacity="0.21" stroke-width="1"/><path d="M1268 812l8 4v-8zM1284 812l-8 4v-8zM1396 868l8 4v-8zM1412 868l-8 4v-8z" stroke-opacity="0.28"/></g></svg>

<svg width="0" height="0" style="position:absolute"><defs><g id="bigsun" fill="#eeeeec"><circle r="54"/><path transform="rotate(0)" d="M0,-85.5 L10.6,-64.5 Q0,-66.5 -10.6,-64.5 Z"/><path transform="rotate(45)" d="M0,-85.5 L10.6,-64.5 Q0,-66.5 -10.6,-64.5 Z"/><path transform="rotate(90)" d="M0,-85.5 L10.6,-64.5 Q0,-66.5 -10.6,-64.5 Z"/><path transform="rotate(135)" d="M0,-85.5 L10.6,-64.5 Q0,-66.5 -10.6,-64.5 Z"/><path transform="rotate(180)" d="M0,-85.5 L10.6,-64.5 Q0,-66.5 -10.6,-64.5 Z"/><path transform="rotate(225)" d="M0,-85.5 L10.6,-64.5 Q0,-66.5 -10.6,-64.5 Z"/><path transform="rotate(270)" d="M0,-85.5 L10.6,-64.5 Q0,-66.5 -10.6,-64.5 Z"/><path transform="rotate(315)" d="M0,-85.5 L10.6,-64.5 Q0,-66.5 -10.6,-64.5 Z"/></g><g id="sun" fill="#fff"><g transform="translate(24,24)"><circle r="15.2"/><path transform="rotate(0)" d="M0,-24 L3.3,-18 Q0,-18.6 -3.3,-18 Z"/><path transform="rotate(45)" d="M0,-24 L3.3,-18 Q0,-18.6 -3.3,-18 Z"/><path transform="rotate(90)" d="M0,-24 L3.3,-18 Q0,-18.6 -3.3,-18 Z"/><path transform="rotate(135)" d="M0,-24 L3.3,-18 Q0,-18.6 -3.3,-18 Z"/><path transform="rotate(180)" d="M0,-24 L3.3,-18 Q0,-18.6 -3.3,-18 Z"/><path transform="rotate(225)" d="M0,-24 L3.3,-18 Q0,-18.6 -3.3,-18 Z"/><path transform="rotate(270)" d="M0,-24 L3.3,-18 Q0,-18.6 -3.3,-18 Z"/><path transform="rotate(315)" d="M0,-24 L3.3,-18 Q0,-18.6 -3.3,-18 Z"/></g></g><g id="pc"><mask id="pcm" maskUnits="userSpaceOnUse" x="-2" y="-2" width="54" height="54"><rect x="-2" y="-2" width="54" height="54" fill="#fff"/><g fill="#000" stroke="#000" stroke-width="6" stroke-linejoin="round"><circle cx="19.500" cy="43.500" r="4.500"/><circle cx="28.100" cy="37.300" r="7.200"/><circle cx="38.800" cy="38.400" r="5.300"/><circle cx="43.300" cy="43.100" r="4.900"/><rect x="19.500" y="40" width="23.800" height="8"/></g></mask><g fill="#fff"><g mask="url(#pcm)"><g transform="translate(24.100,24)"><circle r="15.200"/><path transform="rotate(0)" d="M0,-24 L3.3,-18 Q0,-18.6 -3.3,-18 Z"/><path transform="rotate(45)" d="M0,-24 L3.3,-18 Q0,-18.6 -3.3,-18 Z"/><path transform="rotate(90)" d="M0,-24 L3.3,-18 Q0,-18.6 -3.3,-18 Z"/><path transform="rotate(225)" d="M0,-24 L3.3,-18 Q0,-18.6 -3.3,-18 Z"/><path transform="rotate(270)" d="M0,-24 L3.3,-18 Q0,-18.6 -3.3,-18 Z"/><path transform="rotate(315)" d="M0,-24 L3.3,-18 Q0,-18.6 -3.3,-18 Z"/></g></g><circle cx="19.500" cy="43.500" r="4.500"/><circle cx="28.100" cy="37.300" r="7.200"/><circle cx="38.800" cy="38.400" r="5.300"/><circle cx="43.300" cy="43.100" r="4.900"/><rect x="19.500" y="40" width="23.800" height="8"/></g></g><g id="sunsm" fill="#1e2b30"><g transform="translate(16,16)"><circle r="10"/><path transform="rotate(0)" d="M0,-15.6 L2.3,-12.3 Q0,-12.600000000000001 -2.3,-12.3 Z"/><path transform="rotate(45)" d="M0,-15.6 L2.3,-12.3 Q0,-12.600000000000001 -2.3,-12.3 Z"/><path transform="rotate(90)" d="M0,-15.6 L2.3,-12.3 Q0,-12.600000000000001 -2.3,-12.3 Z"/><path transform="rotate(135)" d="M0,-15.6 L2.3,-12.3 Q0,-12.600000000000001 -2.3,-12.3 Z"/><path transform="rotate(180)" d="M0,-15.6 L2.3,-12.3 Q0,-12.600000000000001 -2.3,-12.3 Z"/><path transform="rotate(225)" d="M0,-15.6 L2.3,-12.3 Q0,-12.600000000000001 -2.3,-12.3 Z"/><path transform="rotate(270)" d="M0,-15.6 L2.3,-12.3 Q0,-12.600000000000001 -2.3,-12.3 Z"/><path transform="rotate(315)" d="M0,-15.6 L2.3,-12.3 Q0,-12.600000000000001 -2.3,-12.3 Z"/></g></g>
<g id="i_wifi" fill="none" stroke="currentColor" stroke-width="1.500"><path d="M1.14 5.23A10.3 10.3 0 0 1 14.66 5.23"/><path d="M2.81 7.91A7.2 7.2 0 0 1 12.99 7.91"/><path d="M4.78 10.19A4.2 4.2 0 0 1 11.02 10.19"/><circle cx="7.900" cy="13" r="2" fill="currentColor" stroke="none"/></g>
<g id="i_bt" fill="none" stroke="currentColor" stroke-width="1.800" stroke-linejoin="miter"><path d="M3.200 4.300l7.300 7.200-3.800 3.500V1l3.800 3.500-7.300 7.200"/></g>
<g id="i_bg"><rect x="2" y="1.800" width="12.100" height="10.200" rx="2.200" fill="none" stroke="currentColor" stroke-width="1.700"/><path d="M3.300 8.300V5.800l2.400-1.600V8.300z" fill="currentColor"/><rect x="6.600" y="3.800" width="4.600" height="5.200" fill="currentColor" opacity="0.350"/><path d="M3 14.900q5-1.500 10 0v1H3z" fill="currentColor"/></g>
<g id="i_notif"><path d="M5.200 4h8.700a1 1 0 0 1 1 1v6.500a1 1 0 0 1-1 1h-3.200l-1.500 2.100-1.500-2.100H5.200a1 1 0 0 1-1-1V5a1 1 0 0 1 1-1z" fill="currentColor" opacity="0.450"/><circle cx="4.400" cy="4" r="3.900" fill="#fff"/><circle cx="4.400" cy="4" r="3.300" fill="currentColor"/><path d="M4.400 1.500v5M2.200 2.750l4.400 2.500M6.600 2.750l-4.400 2.500" stroke="#fff" stroke-width="0.900"/></g>
<g id="i_search" fill="none" stroke="currentColor" stroke-width="2"><circle cx="6.500" cy="6.500" r="4.400"/><path d="M9.800 9.800l4.900 4.900"/></g>
<g id="i_region"><path d="M0 3.200q3.700-1.500 7.500-.300t7.500-.600V12.400q-3.700.900-7.500-.200T0 12.900z" fill="currentColor"/><circle cx="7.700" cy="7.600" r="1.500" fill="none" stroke="#fff" stroke-width="0.800"/><path d="M4.600 5.600a3.600 3.600 0 0 0 1.600 4.600M10.800 5.600a3.600 3.600 0 0 1-1.600 4.600" stroke="#fff" stroke-width="0.800" fill="none" opacity="0.800"/></g>
<g id="i_ua"><circle cx="7.900" cy="7.700" r="7.800" fill="currentColor"/><circle cx="7.900" cy="3.600" r="1.500" fill="#fff"/><path d="M3 5.700l3.500.700h2.800l3.500-.700.300 1.300-3.500.900v1.400l1.500 4.200-1.300.500L7.900 9.900 6 14l-1.300-.5L6.200 9.300V7.900L2.700 7z" fill="#fff"/></g>
<g id="i_oa"><path d="M4.600 1.700h.6a6.300 6.300 0 0 1 0 12.600h-.6z" fill="currentColor" fill-opacity="0.250" stroke="currentColor" stroke-width="1.400"/><path d="M0 5.800h4.300M0 9.600h4.300" stroke="currentColor" stroke-width="1.700" fill="none"/><path d="M15.300 3.300c-1.700-.9-3.200.9-1.600 2.100 1.500 1.100.4 3.300-1.700 2.200" stroke="currentColor" stroke-width="0.900" fill="none"/></g>
<g id="i_priv" fill="currentColor"><rect x="0.900" y="5" width="3.900" height="4.700"/><rect x="6" y="5" width="3.900" height="4.700"/><rect x="11.100" y="5" width="3.900" height="4.700"/><path d="M2.200 5.800h1v3.100h-1zM6.900 5.800h2v3.100h-2zM12 5.800h2v3.100h-2z" fill="#4a90d9" class="pd" opacity="0.700"/><path d="M1 1l2.400 2.600M3.400 1L1 3.600M6 1l2.400 2.600M8.400 1L6 3.600M11 1l2.400 2.600M13.400 1L11 3.600M3.500 1l1.300 1.300M8.500 1l1.300 1.300M13.500 1l1.400 1.300M1 10.700l2.400 2.600M3.400 10.700L1 13.300M6 10.700l2.400 2.600M8.400 10.700L6 13.300M11 10.700l2.400 2.600M13.400 10.700L11 13.300M3.500 13.300l1.300-1.300M8.500 13.300l1.300-1.300M13.500 13.300l1.400-1.300" stroke="currentColor" stroke-width="0.800" opacity="0.750" fill="none"/></g>
<g id="i_share" fill="currentColor"><circle cx="12.400" cy="3.400" r="2.600"/><circle cx="12.400" cy="13.200" r="2.600"/><circle cx="3.300" cy="8.300" r="2.600"/><path d="M3.300 8.300l9.100-4.900M3.300 8.300l9.100 4.900" stroke="currentColor" stroke-width="1.800" fill="none"/></g>
<g id="i_sound" fill="currentColor"><path d="M0.400 7.400L15.300 3v5H0.400z"/><rect x="0.400" y="10" width="15.300" height="1.800"/><rect x="9.300" y="8.900" width="2.200" height="4.100" rx="0.600"/></g>
<g id="i_power" fill="none" stroke="currentColor" stroke-width="1.700"><path d="M1 16V4.300h2.300V1.200h4.600v3.100h2.200V7"/><path d="M7.500 9.700l4.500-2.200-.7 2.200h4.200l-4.800 2.400.7-2.400z" fill="currentColor" stroke="none"/></g>
</defs></svg>
<div id="topbar"><div class="abs" style="left:0;top:27px;width:7px;height:7px;background:radial-gradient(circle at 100% 100%,rgba(0,0,0,0) 6.400px,rgba(0,0,0,0.42) 7.200px)"></div>
<div class="abs" style="left:1593px;top:27px;width:7px;height:7px;background:radial-gradient(circle at 0 100%,rgba(0,0,0,0) 6.400px,rgba(0,0,0,0.42) 7.200px)"></div>

<svg class="abs" style="left:98px;top:10px" width="10" height="6" viewBox="0 0 10 6"><path d="M0.600 0.800h8.800L5 5.400z" fill="#fff"/></svg>
<svg class="abs" style="left:214px;top:10px" width="10" height="6" viewBox="0 0 10 6"><path d="M0.600 0.800h8.800L5 5.400z" fill="#fff"/></svg>
<svg class="abs" style="left:1576px;top:10px" width="10" height="6" viewBox="0 0 10 6"><path d="M0.300 0.800h9.400L5 5.600z" fill="#fff"/></svg>
<svg class="abs" style="left:131px;top:5px" width="16" height="16" viewBox="0 0 16 16" fill="none" stroke="#fff">
 <path d="M3.200 2.300L8.800 8" stroke-width="2.100"/><path d="M2.300 0.800l3 1.700-.3 2.300-2.300.3-1.700-3z" fill="#fff" stroke="none"/>
 <path d="M9.600 9.400l4.400 4.400" stroke-width="2.600" stroke-linecap="round"/>
 <path d="M2.800 13.500L9.300 7" stroke-width="2" stroke-linecap="round"/>
 <path d="M14.900 3.300a3.600 3.600 0 0 1-5.300 3.600 3.600 3.600 0 0 1 2.300-6.200l-1.500 2.200.8 1.800 2 .2z" fill="#fff" stroke="none"/>
 <circle cx="2.800" cy="13.300" r="1.600" fill="#fff" stroke="none"/>
</svg>
<svg class="abs" style="left:1464px;top:4px" width="17" height="17" viewBox="0 0 17 17"><circle cx="8.500" cy="8.500" r="5.900" fill="none" stroke="#fff" stroke-width="1.700"/><circle cx="8.500" cy="8.500" r="3.400" fill="#fff"/><path d="M8.500 0.300v2.500M8.500 14.200v2.500M0.300 8.500h2.500M14.200 8.500h2.500" stroke="#fff" stroke-width="1.500"/></svg>
<svg class="abs" style="left:1493px;top:5px" width="16" height="16" viewBox="0 0 16 16" fill="none"><path d="M1.200 5.800a10 10 0 0 1 13.600 0" stroke="#8b9a98" stroke-width="2"/><path d="M3.700 9a6.400 6.400 0 0 1 8.600 0" stroke="#fff" stroke-width="2"/><circle cx="8" cy="13" r="2" fill="#fff"/></svg>
<svg class="abs" style="left:1520px;top:5px" width="17" height="16" viewBox="0 0 17 16" fill="none"><path d="M0.800 5.300h2.700L7.200 1.600v12.800L3.500 10.700H0.800z" fill="#fff"/><path d="M9 5.200a4 4 0 0 1 0 5.600" stroke="#fff" stroke-width="1.500"/><path d="M10.800 3a7 7 0 0 1 0 10" stroke="#fff" stroke-width="1.500"/><path d="M12.700 1.200a9.600 9.600 0 0 1 0 13.600" stroke="#fff" stroke-width="1.500"/></svg>
<svg class="abs" style="left:1550px;top:4px" width="14" height="18" viewBox="0 0 14 18" fill="none"><path d="M4.300 2.200V1h5.400v1.200M2 2.700h10v13.600H2z" stroke="#8b9a98" stroke-width="1.600"/><path d="M8.300 4.600L4.200 10h2.600l-1.200 4.300L9.900 8.600H7.200z" fill="#fff"/></svg>

<span class="t" style="left:12px"><span id="t_apps" style="letter-spacing:0.091px;position:relative;left:0.5px">Applications</span></span>
<span class="t" style="left:153px"><span id="t_tset" style="letter-spacing:0.287px;position:relative;left:0.52px">Settings</span></span>
<span class="t" style="left:738px"><span id="t_clock" style="letter-spacing:0.149px;position:relative;left:0.5px">Wed Apr 18, 15:19</span></span>
</div>

<div id="wx">
 <div id="wxhead">
  <div class="wbtn" style="left:6px;top:6px;width:75px;height:34px;line-height:32px" id="places"><span id="t_places" style="letter-spacing:-0.64px;position:relative;left:-1.5px">Places</span></div>
  <div class="abs" style="left:0;top:6px;width:696px;text-align:center;font-size:15px;font-weight:normal;-webkit-text-stroke:0.55px #8e9192;color:#8e9192;line-height:17px"><span id="t_city" style="letter-spacing:0.349px;position:relative;left:0.5px">Nuernberg</span></div>
  <div class="abs" style="left:0;top:26px;width:696px;text-align:center;font-size:12px;color:#6c7172;line-height:14px"><span id="t_country" style="letter-spacing:-0.267px;position:relative;left:0.2px">Germany</span></div>
  <div class="wbtn" style="left:609px;top:6px;width:34px;height:34px" id="refresh">
   <svg class="abs" style="left:7.2px;top:7.1px" width="16" height="16" viewBox="0 0 16 16"><path d="M12.5 11.700A5.300 5.300 0 1 1 11.600 4.800" fill="none" stroke="#9a9c9a" stroke-width="2"/><path d="M14.800 2.900v5.900H9z" fill="#9a9c9a"/></svg>
  </div>
  <div class="abs" style="left:649px;top:6px;width:1px;height:34px;background:#2b3133"></div>
  <svg class="abs" style="left:668px;top:18px" width="10" height="10" viewBox="0 0 10 10"><path d="M1.2 1.2l7.6 7.6M8.8 1.2l-7.6 7.6" stroke="#9a9c9a" stroke-width="2" fill="none"/></svg>
 </div>
 <div id="wxbody">
  <div id="glow"></div>
  <svg class="abs" style="left:60px;top:60px" width="176" height="176" viewBox="-88 -88 176 176"><use href="#bigsun"/></svg>
  <div class="abs" style="left:266.3px;top:52.2px;font-size:58px;color:#eeeeec;line-height:68px;white-space:nowrap"><span id="t_big" style="display:inline-block;transform-origin:0 0;transform:scaleX(0.942)">75 °F</span></div>
  <div class="abs" style="left:266px;top:126.5px;font-size:38px;color:#eeeeec;line-height:44px;white-space:nowrap"><span id="t_sky" style="display:inline-block;transform-origin:0 0;transform:scaleX(0.913)">Clear sky</span></div>
  <div class="abs" style="left:50px;top:278px;width:243px;height:34px;background:#232b2e;border:1px solid #12181a;border-radius:2px"></div>
  <div class="abs" style="left:50px;top:278px;width:122px;height:34px;background:#0f1517;border-radius:2px 0 0 2px"></div>
  <div class="abs tg" style="left:50px;top:278px;width:122px"><span id="t_today" style="letter-spacing:-0.35px;position:relative;left:0.2px">Today</span></div>
  <div class="abs tg" style="left:172px;top:278px;width:121px"><span id="t_tom" style="letter-spacing:-0.045px;position:relative;left:-0.55px">Tomorrow</span></div>
  <div class="abs" style="left:50px;top:378px;width:40px;height:40px;border-radius:4px;background:rgba(46,58,62,0.55)"></div>
  <svg class="abs" style="left:62px;top:390px" width="16" height="16" viewBox="0 0 16 16"><path d="M10.200 2.600l-5.400 5.400 5.400 5.400" fill="none" stroke="#a39393" stroke-width="2.100"/></svg>
  <div class="abs" style="left:486px;top:378px;width:40px;height:40px;border-radius:4px;background:#374c53"></div>
  <svg class="abs" style="left:498px;top:390px" width="16" height="16" viewBox="0 0 16 16"><path d="M5.300 2.600l5.400 5.400-5.400 5.400" fill="none" stroke="#eeeeec" stroke-width="2.100"/></svg>
  
  <div class="abs hl" style="left:108px;top:357px;width:80px"><span id="t_h0" style="letter-spacing:-0.075px;position:relative;left:0.35px">16:00</span></div>
  <svg class="abs" style="left:132px;top:382px" width="32" height="32" viewBox="0 0 32 32"><use href="#sunsm"/></svg>
  <div class="abs hl" style="left:108px;top:421px;width:80px"><span id="t_ht0" style="letter-spacing:-1.2px;position:relative;left:-0.1px">73 °F</span></div>
  <div class="abs hl" style="left:178px;top:357px;width:80px"><span id="t_h1" style="letter-spacing:-0.075px;position:relative;left:0.35px">17:00</span></div>
  <svg class="abs" style="left:202px;top:382px" width="32" height="32" viewBox="0 0 32 32"><use href="#sunsm"/></svg>
  <div class="abs hl" style="left:178px;top:421px;width:80px"><span id="t_ht1" style="letter-spacing:-1.2px;position:relative;left:-0.1px">73 °F</span></div>
  <div class="abs hl" style="left:248px;top:357px;width:80px"><span id="t_h2" style="letter-spacing:-0.075px;position:relative;left:0.35px">18:00</span></div>
  <svg class="abs" style="left:272px;top:382px" width="32" height="32" viewBox="0 0 32 32"><use href="#sunsm"/></svg>
  <div class="abs hl" style="left:248px;top:421px;width:80px"><span id="t_ht2" style="letter-spacing:-1.2px;position:relative;left:-0.1px">73 °F</span></div>
  <div class="abs hl" style="left:318px;top:357px;width:80px"><span id="t_h3" style="letter-spacing:-0.075px;position:relative;left:0.35px">19:00</span></div>
  <svg class="abs" style="left:342px;top:382px" width="32" height="32" viewBox="0 0 32 32"><use href="#sunsm"/></svg>
  <div class="abs hl" style="left:318px;top:421px;width:80px"><span id="t_ht3" style="letter-spacing:-1.2px;position:relative;left:-0.1px">71 °F</span></div>
  <div class="abs hl" style="left:388px;top:357px;width:80px"><span id="t_h4" style="letter-spacing:-0.325px;position:relative;left:0.35px">20:00</span></div>
  <svg class="abs" style="left:412px;top:382px" width="32" height="32" viewBox="0 0 32 32"><use href="#sunsm"/></svg>
  <div class="abs hl" style="left:388px;top:421px;width:80px"><span id="t_ht4" style="letter-spacing:-1.0px;position:relative;left:-0.5px">65 °F</span></div>
  <div class="abs" style="left:452px;top:344.5px;width:1px;height:108px;background:repeating-linear-gradient(180deg,rgba(45,100,118,0.5) 0 4px,rgba(0,0,0,0) 4px 6.5px)"></div>
  <div id="wxside">
   <div class="abs dn" style="left:24px;top:25px"><span id="t_d0" style="letter-spacing:-0.229px;position:relative;left:0.5px">Thursday</span></div>
   <svg class="abs" style="left:24px;top:49px;overflow:visible" width="48" height="48" viewBox="0 0 48 48"><use href="#pc"/></svg>
   <div class="abs dt" style="left:82px;top:50px"><span id="t_dt0" style="letter-spacing:-1.1px;position:relative;left:0.6px">75 °F</span></div>
   <div class="abs dn" style="left:24px;top:123px"><span id="t_d1" style="letter-spacing:-0.08px;position:relative;left:-0.4px">Friday</span></div>
   <svg class="abs" style="left:24px;top:147px;overflow:visible" width="48" height="48" viewBox="0 0 48 48"><use href="#pc"/></svg>
   <div class="abs dt" style="left:82px;top:148px"><span id="t_dt1" style="letter-spacing:-1.1px;position:relative;left:0.6px">75 °F</span></div>
   <div class="abs dn" style="left:24px;top:221px"><span id="t_d2" style="letter-spacing:-0.029px;position:relative;left:-0.2px">Saturday</span></div>
   <svg class="abs" style="left:24px;top:245px;overflow:visible" width="48" height="48" viewBox="0 0 48 48"><use href="#pc"/></svg>
   <div class="abs dt" style="left:82px;top:246px"><span id="t_dt2" style="letter-spacing:-1.05px;position:relative;left:0.2px">71 °F</span></div>
   <div class="abs dn" style="left:24px;top:319px"><span id="t_d3" style="letter-spacing:-0.56px;position:relative;left:0.0px">Sunday</span></div>
   <svg class="abs" style="left:24px;top:343px;overflow:visible" width="48" height="48" viewBox="0 0 48 48"><use href="#sun"/></svg>
   <div class="abs dt" style="left:82px;top:344px"><span id="t_dt3" style="letter-spacing:-1.05px;position:relative;left:0.2px">71 °F</span></div>
   <div class="abs dn" style="left:24px;top:417px"><span id="t_d4" style="letter-spacing:-0.24px;position:relative;left:-0.7px">Monday</span></div>
   <svg class="abs" style="left:24px;top:441px;overflow:visible" width="48" height="48" viewBox="0 0 48 48"><use href="#pc"/></svg>
   <div class="abs dt" style="left:82px;top:442px"><span id="t_dt4" style="letter-spacing:-1.1px;position:relative;left:0.6px">73 °F</span></div>
  </div>
 </div>
</div>

<div id="st">
 <div id="sthead">
  <div class="abs" id="sbtn" style="left:6px;top:6px;width:34px;height:34px;border:1px solid #b3b3ae;border-radius:3px;background:linear-gradient(#e8e8e6,#d4d4d1)">
   <svg class="abs" style="left:8px;top:8px" width="16" height="16" viewBox="0 0 16 16"><circle cx="6.5" cy="6.5" r="4.5" fill="none" stroke="#2e3436" stroke-width="2"/><path d="M10 10l4.5 4.5" stroke="#2e3436" stroke-width="2" fill="none"/></svg>
  </div>
  <div class="abs" style="left:0;top:0;width:242px;text-align:center;font-size:15px;font-weight:normal;-webkit-text-stroke:0.55px #2e3436;color:#2e3436;line-height:46px"><span id="t_settings" style="letter-spacing:0.315px;position:relative;left:0.4px">Settings</span></div>
  <div class="abs" style="left:243px;top:0;width:516px;text-align:center;font-size:15px;font-weight:normal;-webkit-text-stroke:0.55px #2e3436;color:#2e3436;line-height:46px;padding-right:0"><span id="t_privacy" style="letter-spacing:0.0px;position:relative;left:-1.0px">Privacy</span></div>
  <div class="abs" style="left:712px;top:6px;width:1px;height:34px;background:#d5d5d2"></div>
  <svg class="abs" style="left:731px;top:18px" width="10" height="10" viewBox="0 0 10 10"><path d="M1.2 1.2l7.6 7.6M8.8 1.2l-7.6 7.6" stroke="#2e3436" stroke-width="2" fill="none"/></svg>
 </div>
 <div id="stside">
  <div class="row" style="top:0px"><svg viewBox="0 0 16 16"><use href="#i_wifi"/></svg><span id="t_r0" style="letter-spacing:0.0px;position:relative;left:0.0px">Wi-Fi</span></div>
  <div class="row" style="top:48px"><svg viewBox="0 0 16 16"><use href="#i_bt"/></svg><span id="t_r1" style="letter-spacing:0.062px;position:relative;left:-0.75px">Bluetooth</span></div>
  <div class="hr" style="top:96px"></div>
  <div class="row" style="top:97px"><svg viewBox="0 0 16 16"><use href="#i_bg"/></svg><span id="t_r3" style="letter-spacing:-0.333px;position:relative;left:-1.0px">Background</span></div>
  <div class="row" style="top:145px"><svg viewBox="0 0 16 16"><use href="#i_notif"/></svg><span id="t_r4" style="letter-spacing:-0.042px;position:relative;left:-1.25px">Notifications</span></div>
  <div class="row" style="top:193px"><svg viewBox="0 0 16 16"><use href="#i_search"/></svg><span id="t_r5" style="letter-spacing:-0.5px;position:relative;left:-0.75px">Search</span></div>
  <div class="row" style="top:241px"><svg viewBox="0 0 16 16"><use href="#i_region"/></svg><span id="t_r6" style="letter-spacing:-0.469px;position:relative;left:-1.25px">Region &amp; Language</span></div>
  <div class="row" style="top:289px"><svg viewBox="0 0 16 16"><use href="#i_ua"/></svg><span id="t_r7" style="letter-spacing:-0.367px;position:relative;left:-0.75px">Universal Access</span></div>
  <div class="hr" style="top:337px"></div>
  <div class="row" style="top:338px"><svg viewBox="0 0 16 16"><use href="#i_oa"/></svg><span id="t_r9" style="letter-spacing:-0.25px;position:relative;left:-0.25px">Online Accounts</span></div>
  <div class="row sel" style="top:386px"><svg viewBox="0 0 16 16"><use href="#i_priv"/></svg><span id="t_r10" style="letter-spacing:-0.667px;position:relative;left:-1.0px">Privacy</span></div>
  <div class="row" style="top:434px"><svg viewBox="0 0 16 16"><use href="#i_share"/></svg><span id="t_r11" style="letter-spacing:-0.532px;position:relative;left:0.2px">Sharing</span></div>
  <div class="hr" style="top:482px"></div>
  <div class="row" style="top:483px"><svg viewBox="0 0 16 16"><use href="#i_sound"/></svg><span id="t_r13" style="letter-spacing:-0.4px;position:relative;left:-0.5px">Sound</span></div>
  <div class="row" style="top:531px"><svg viewBox="0 0 16 16"><use href="#i_power"/></svg><span id="t_r14" style="letter-spacing:-0.45px;position:relative;left:-1.0px">Power</span></div>
  <div class="abs" style="left:0;top:554px;width:242px;height:1px;background:repeating-linear-gradient(90deg,#c4c4c1 0 5px,rgba(255,255,255,0) 5px 10px)"></div>
 </div>
 <div id="stsep"></div>
 <div id="list">
  <div class="li" style="top:0px"><span class="l"><span id="t_l0" style="letter-spacing:-0.4px;position:relative;left:-1.0px">Screen Lock</span></span><span class="r"><span id="t_v0" style="letter-spacing:-1.0px;position:relative;left:-1.0px">On</span></span></div>
  <div class="abs" style="left:0;top:60px;width:385px;height:1px;background:#e3e3e1"></div>
  <div class="li" style="top:61px"><span class="l"><span id="t_l1" style="letter-spacing:-0.407px;position:relative;left:-1.25px">Location Services</span></span><span class="r"><span id="t_v1" style="letter-spacing:-0.2px;position:relative;left:-0.5px">In use</span></span></div>
  <div class="abs" style="left:0;top:121px;width:385px;height:1px;background:#e3e3e1"></div>
  <div class="li" style="top:122px"><span class="l"><span id="t_l2" style="letter-spacing:-0.142px;position:relative;left:-1.0px">Usage &amp; History</span></span><span class="r"><span id="t_v2" style="letter-spacing:-1.0px;position:relative;left:-1.0px">On</span></span></div>
  <div class="abs" style="left:0;top:182px;width:385px;height:1px;background:#e3e3e1"></div>
  <div class="li" style="top:183px"><span class="l"><span id="t_l3" style="letter-spacing:-0.286px;position:relative;left:-1.5px">Purge Trash &amp; Temporary Files</span></span><span class="r"><span id="t_v3" style="letter-spacing:0.5px;position:relative;left:-0.5px">Off</span></span></div>
 </div>
</div>
</body>
</html>
